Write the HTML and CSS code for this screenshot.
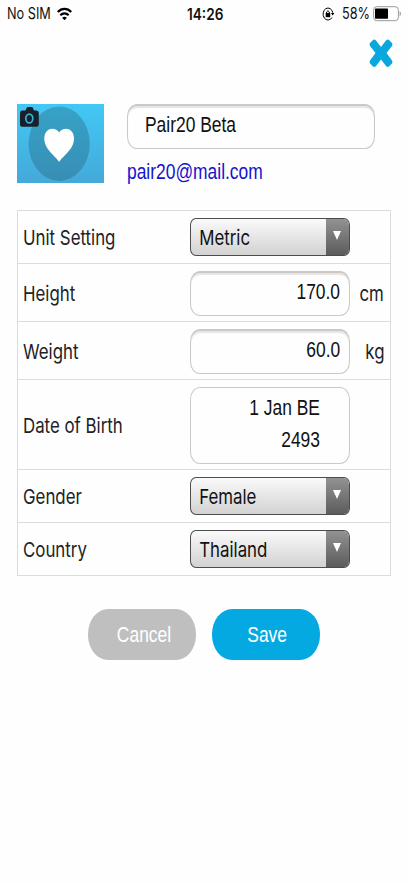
FILE: index.html
```html
<!DOCTYPE html>
<html lang="en">
<head>
<meta charset="utf-8">
<title>Profile</title>
<link rel="stylesheet" href="styles.css">
</head>
<body>
<header class="status">
  <div class="carrier"><span class="sys">No SIM</span>
    <svg class="wifi" width="15" height="14" viewBox="0 0 15 14" fill="none" stroke="#000" stroke-width="2.2"><path d="M.8 5C4.6.9 10.400.9 14.200 5M3.300 8.300c2.400-2.500 6-2.500 8.400 0"/><path d="M7.500 13.300 5.100 10.700Q7.500 8.700 9.900 10.700Z" fill="#000" stroke="none"/></svg>
  </div>
  <div class="clock"><span class="sys">14:26</span></div>
  <div class="power">
    <svg class="lock" width="13" height="14" viewBox="0 0 13 14" fill="none" stroke="#000"><path d="M10 10.500A4.900 6 0 1 1 10.800 5.800"/><path d="M8.900 6h3.500l-1.700 2.600z" fill="#000" stroke="none"/><rect x="3.700" y="6" width="4.500" height="4.200" fill="#000" stroke="none"/><path d="M4.600 6.500V5q1.400-2.600 2.700 0v1.500"/></svg>
    <span class="sys">58%</span>
    <svg class="battery" width="29" height="16" viewBox="0 0 29 16"><rect x=".6" y=".7" width="24.800" height="14" rx="3" ry="3.500" fill="none" stroke="#999"/><rect x="2" y="2.500" width="13" height="10.300" rx=".7"/><path d="M26.700 5q2.300 2.700 0 5.400z" fill="#888"/></svg>
  </div>
</header>
<div class="close">
  <svg width="24" height="29" viewBox="0 0 24 29"><path d="M1 7Q0 5.500 1 4L4 1Q5.500 0 7 1.500L12 8 17 1.500Q18.500 0 20 1L23 4Q24 5.500 23 7L17.500 14 23 21.500Q24 23 23 24.500L20 27.500Q18.500 28.500 17 27L12 20.500 7 27Q5.500 28.500 4 27.500L1 24.500Q0 23 1 21.500L6.500 14Z" fill="#08a8df"/></svg>
</div>
<main>
  <section class="profile">
    <svg class="avatar" width="87" height="79" viewBox="0 0 87 79">
      <defs><linearGradient id="sky" x2="0" y2="1"><stop stop-color="#42c8f5"/><stop offset="1" stop-color="#44a9d9"/></linearGradient><linearGradient id="disc" x2="0" y2="1"><stop stop-color="#37a2c7"/><stop offset="1" stop-color="#378eb5"/></linearGradient></defs>
      <rect width="87" height="79" fill="url(#sky)"/><ellipse cx="42.200" cy="39.700" rx="30.600" ry="37.200" fill="url(#disc)"/>
      <path d="M42.200 58C39.500 52.500 27.300 46 27.300 34.500C27.300 24 38 22 42.200 28.500C46.400 22 57 24 57 34.500C57 46 44.900 52.500 42.200 58Z" fill="#fff"/>
      <path d="M5 6.500h3.500L9.500 4Q10 3 11 3h3.500Q15.500 3 16 4l1 2.500h2.500q2.300 0 2.300 2.500v11q0 2.800-2.300 2.800H5Q3 22.800 3 20V9q0-2.500 2-2.500Z" fill="#17212a"/><ellipse cx="12.300" cy="14.500" rx="3.500" ry="4.400" fill="none" stroke="#3caed5" stroke-width="1.700"/>
    </svg>
    <div class="identity">
      <div class="field name"><span class="txt">Pair20 Beta</span></div>
      <div class="email"><span class="txt">pair20@mail.com</span></div>
    </div>
  </section>
  <section class="settings">
    <div class="row"><div class="label"><span class="lab">Unit Setting</span></div><div class="select"><span class="lab">Metric</span><i class="drop"></i></div></div>
    <div class="row tall"><div class="label"><span class="lab">Height</span></div><div class="field num"><span class="txt end">170.0</span></div><div class="unit"><span class="lab end">cm</span></div></div>
    <div class="row tall"><div class="label"><span class="lab">Weight</span></div><div class="field num"><span class="txt end">60.0</span></div><div class="unit"><span class="lab end">kg</span></div></div>
    <div class="row date-row"><div class="label"><span class="lab">Date of Birth</span></div><div class="field date"><span class="txt end">1 Jan BE<br>2493</span></div></div>
    <div class="row"><div class="label"><span class="lab">Gender</span></div><div class="select"><span class="lab">Female</span><i class="drop"></i></div></div>
    <div class="row"><div class="label"><span class="lab">Country</span></div><div class="select"><span class="lab">Thailand</span><i class="drop"></i></div></div>
  </section>
  <div class="actions">
    <div class="button cancel"><span class="txt">Cancel</span></div>
    <div class="button save"><span class="txt">Save</span></div>
  </div>
</main>
</body>
</html>
```
FILE: styles.css
```css
* { box-sizing: border-box; }
body { margin: 0; width: 408px; height: 883px; background: #fefefe; color: #222226; overflow: hidden; font-family: Inter, "Liberation Sans", sans-serif; }
svg { display: block; flex: none; }
.sys, .txt, .lab { display: inline-block; white-space: nowrap; transform-origin: left center; }
.sys { font-size: 15.500px; line-height: 20px; transform: scaleX(.82); color: #111; }
.lab { font-size: 20.600px; line-height: 26px; transform: scaleX(.818); }
.txt { font-family: "Liberation Sans", sans-serif; font-size: 21.200px; line-height: 32px; transform: scaleX(.822); color: #111; }
.end { transform-origin: right center; text-align: right; }

.status { display: grid; grid-template-columns: 187px 134px 87px; height: 28px; padding-top: 4px; }
.carrier { display: flex; padding-left: 7px; }
.carrier .sys { width: 50px; }
.wifi { margin-top: 3px; }
.clock .sys { font-weight: 600; transform: scaleX(.88); }
.power { display: flex; }
.lock { margin: 3px 7px 0 1px; }
.power .sys { width: 31px; }
.battery { margin-top: 2px; }
.close { display: flex; justify-content: flex-end; padding: 11px 15px 0 0; height: 76px; }

.profile { display: flex; gap: 23px; height: 106px; padding-left: 17px; }
.identity { width: 248px; }
.field { border: 1px solid #cbc9c6; border-top: 2px solid #cbc9c6; border-radius: 10px / 12px; background: #fefefe; box-shadow: inset 0 2px 1px #e6e5e3; height: 45px; }
.name { padding: 3px 0 0 17px; }
.email { padding-top: 7px; }
.email .txt { color: #1512ce; }

.settings { margin: 0 17px; width: 374px; border: 1px solid #dcdcdc; border-bottom: 0; }
.row { display: grid; grid-template-columns: 172px 160px 34px; align-items: center; height: 53px; border-bottom: 1px solid #dcdcdc; }
.tall { height: 58px; padding-top: 1px; }
.date-row { height: 90px; padding-top: 1px; }
.label { padding: 2px 0 0 5px; }
.select { display: flex; justify-content: space-between; height: 38px; border: 1px solid #4d4d4d; border-radius: 6px / 7px; background: linear-gradient(#fafafa, #d2d2d2); overflow: hidden; }
.select .lab { padding: 6px 0 0 10px; color: #111; }
.drop { display: flex; justify-content: center; width: 23px; padding: 12px 2px 0 0; background: linear-gradient(#929292, #5c5c5c); }
.drop::before { content: ""; width: 0; height: 0; border: 4px solid transparent; border-top: 9px solid #fff; border-bottom: 0; }
.num { padding: 3px 9px 0 0; text-align: right; }
.date { height: 77px; padding: 4px 29px 0 0; border-top-width: 1px; box-shadow: none; text-align: right; }
.unit { display: flex; justify-content: flex-end; padding: 1px 0 0; }

.actions { display: flex; gap: 16px; margin: 33px 0 0 88px; }
.button { display: flex; align-items: center; justify-content: center; width: 108px; height: 51px; padding: 1px 0 0 3px; border-radius: 20px / 25px; }
.button .txt { color: #fff; transform-origin: center; }
.cancel { background: #bfbfbf; }
.save { background: #04a9e2; }
```
